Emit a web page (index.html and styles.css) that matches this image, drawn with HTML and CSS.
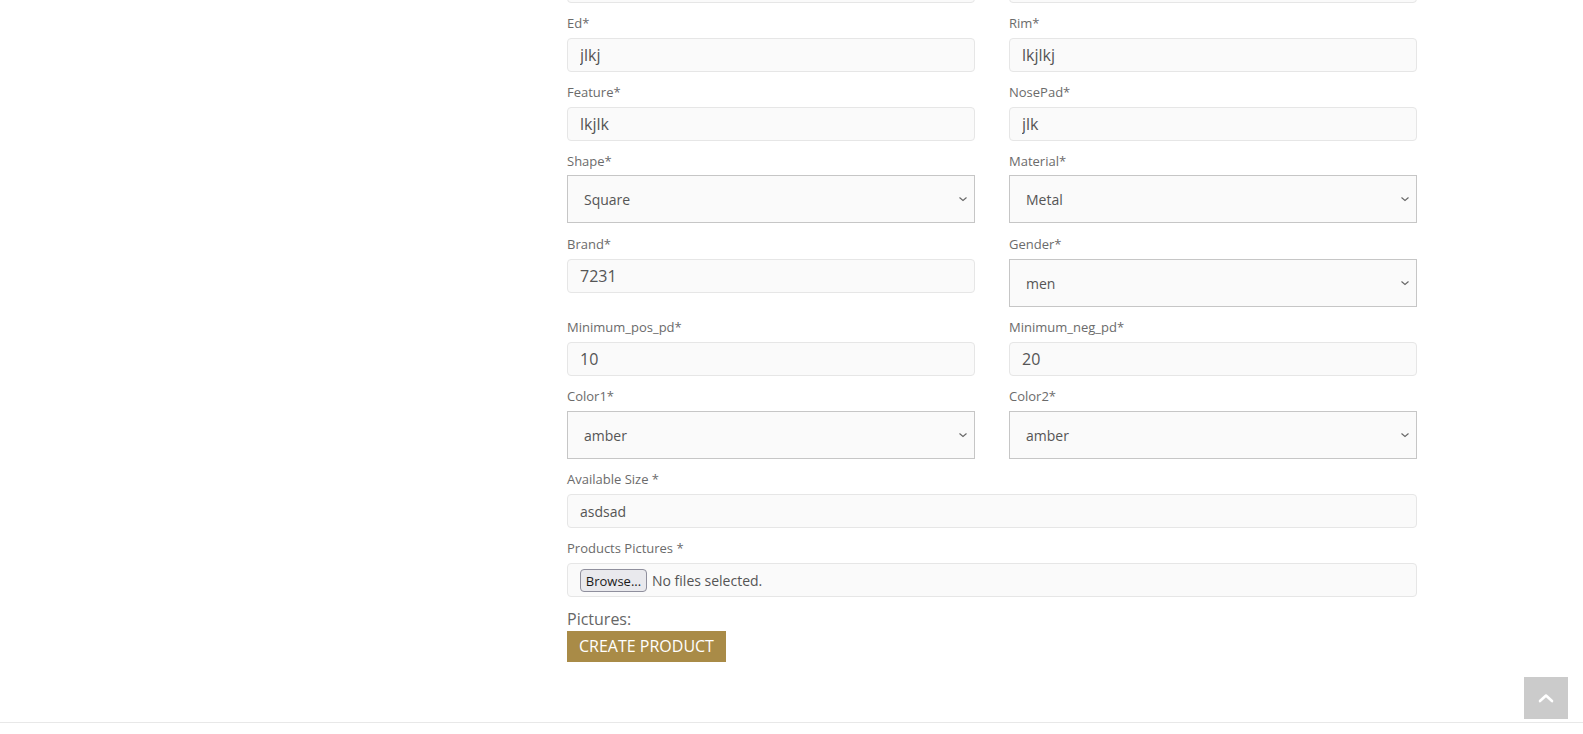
FILE: index.html
```html
<!DOCTYPE html>
<html lang="en">
<head>
<meta charset="utf-8">
<title>Create Product</title>
<link rel="stylesheet" href="styles.css">
</head>
<body>
<div class="page">
  <aside class="sidebar"></aside>
  <main class="content">
    <form class="product-form">
      <div class="form-grid">
        <div class="form-group">
          <input class="form-control" type="text" aria-label="Previous field">
        </div>
        <div class="form-group">
          <input class="form-control" type="text" aria-label="Previous field">
        </div>

        <div class="form-group">
          <label>Ed*</label>
          <input class="form-control" type="text" value="jlkj">
        </div>
        <div class="form-group">
          <label>Rim*</label>
          <input class="form-control" type="text" value="lkjlkj">
        </div>

        <div class="form-group">
          <label>Feature*</label>
          <input class="form-control" type="text" value="lkjlk">
        </div>
        <div class="form-group">
          <label>NosePad*</label>
          <input class="form-control" type="text" value="jlk">
        </div>

        <div class="form-group raised">
          <label>Shape*</label>
          <select class="form-select"><option>Square</option></select>
        </div>
        <div class="form-group raised">
          <label>Material*</label>
          <select class="form-select"><option>Metal</option></select>
        </div>

        <div class="form-group">
          <label>Brand*</label>
          <input class="form-control" type="text" value="7231">
        </div>
        <div class="form-group">
          <label>Gender*</label>
          <select class="form-select"><option>men</option></select>
        </div>

        <div class="form-group">
          <label>Minimum_pos_pd*</label>
          <input class="form-control" type="text" value="10">
        </div>
        <div class="form-group">
          <label>Minimum_neg_pd*</label>
          <input class="form-control" type="text" value="20">
        </div>

        <div class="form-group">
          <label>Color1*</label>
          <select class="form-select"><option>amber</option></select>
        </div>
        <div class="form-group">
          <label>Color2*</label>
          <select class="form-select"><option>amber</option></select>
        </div>
      </div>

      <div class="form-group">
        <label>Available Size *</label>
        <input class="form-control small-text" type="text" value="asdsad">
      </div>

      <div class="form-group">
        <label>Products Pictures *</label>
        <div class="file-control">
          <span class="browse-btn">Browse...</span>
          <span class="file-status">No files selected.</span>
        </div>
      </div>

      <div class="pictures">Pictures:</div>
      <button type="button" class="btn-create">CREATE PRODUCT</button>
    </form>
  </main>
</div>
<footer class="footer"></footer>
<a class="back-top" href="#" aria-label="Back to top">
  <svg width="16" height="10" viewBox="0 0 16 10"><path d="M2 8 L8 2.5 L14 8" fill="none" stroke="#fff" stroke-width="2.6" stroke-linecap="round" stroke-linejoin="round"/></svg>
</a>
</body>
</html>
```

FILE: styles.css
```css
* { box-sizing: border-box; }

html, body {
  margin: 0;
  padding: 0;
  background: #fff;
  font-family: "Open Sans", "Noto Sans", sans-serif;
  color: #666;
  overflow: hidden;
}

.page {
  display: grid;
  grid-template-columns: 567px 850px 1fr;
}

.content {
  padding-bottom: 60px;
}

.product-form {
  margin-top: -31px;
}

.form-grid {
  display: grid;
  grid-template-columns: 408px 408px;
  column-gap: 34px;
  align-items: start;
}

.form-group {
  margin-bottom: 10px;
}

.form-group label {
  display: block;
  font-size: 13px;
  line-height: 21px;
  color: #6b6b6b;
  margin-bottom: 4px;
}

.form-group.raised label {
  margin-bottom: 3px;
}

.form-group.raised {
  margin-bottom: 11px;
}

.form-control {
  display: block;
  width: 100%;
  height: 34px;
  padding: 0 12px;
  font-family: "Open Sans", "Noto Sans", sans-serif;
  font-size: 16px;
  color: #555;
  background: #fafafa;
  border: 1px solid #e6e6e6;
  border-radius: 4px;
  outline: none;
}

.form-control.small-text {
  font-size: 14px;
}

.form-select {
  display: block;
  width: 100%;
  height: 48px;
  padding: 0 30px 0 16px;
  font-family: "Open Sans", "Noto Sans", sans-serif;
  font-size: 14px;
  color: #555;
  background-color: #fafafa;
  border: 1px solid #c6c6c6;
  border-radius: 0;
  appearance: none;
  -webkit-appearance: none;
  background-image: url("data:image/svg+xml;utf8,<svg xmlns='http://www.w3.org/2000/svg' width='10' height='6' viewBox='0 0 10 6'><path d='M1.5 1.5 L5 4.5 L8.5 1.5' fill='none' stroke='%23666' stroke-width='1.1'/></svg>");
  background-repeat: no-repeat;
  background-position: right 6px center;
  outline: none;
}

.file-control {
  display: flex;
  align-items: center;
  gap: 5px;
  height: 34px;
  padding: 1px 12px 0 12px;
  background: #fafafa;
  border: 1px solid #e6e6e6;
  border-radius: 4px;
}

.browse-btn {
  display: inline-flex;
  align-items: center;
  justify-content: center;
  width: 67px;
  height: 23px;
  font-size: 13px;
  color: #1b1b1b;
  background: #e9e9ed;
  border: 1px solid #8f8f9d;
  border-radius: 4px;
}

.file-status {
  font-size: 14px;
  color: #555;
}

.pictures {
  font-size: 16px;
  line-height: 24px;
  color: #666;
}

.btn-create {
  display: block;
  height: 31px;
  padding: 0 12px;
  font-family: "Open Sans", "Noto Sans", sans-serif;
  font-size: 16px;
  line-height: 31px;
  color: #fff;
  background: #a98b47;
  border: none;
  border-radius: 0;
  cursor: pointer;
}

.footer {
  border-top: 1px solid #e8e8e8;
  height: 40px;
}

.back-top {
  position: fixed;
  right: 15px;
  bottom: 15px;
  width: 44px;
  height: 42px;
  background: #cbcbcb;
  display: flex;
  align-items: center;
  justify-content: center;
}
```
